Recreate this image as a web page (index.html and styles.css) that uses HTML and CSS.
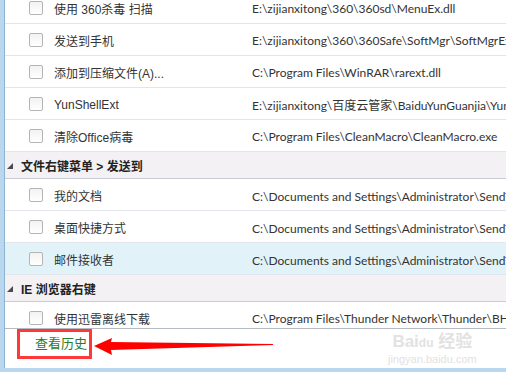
FILE: index.html
```html
<!DOCTYPE html>
<html lang="zh-CN">
<head>
    <meta charset="UTF-8">
    <title>右键菜单管理</title>
    <link rel="stylesheet" href="styles.css">
</head>
<body>
    <div class="panel">
        <div class="list">
            <div class="list-inner">
                <div class="row">
                    <span class="check"></span>
                    <span class="name">使用 360杀毒 扫描</span>
                    <span class="path">E:\zijianxitong\360\360sd\MenuEx.dll</span>
                </div>
                <div class="row">
                    <span class="check"></span>
                    <span class="name">发送到手机</span>
                    <span class="path">E:\zijianxitong\360\360Safe\SoftMgr\SoftMgrExt.dll</span>
                </div>
                <div class="row">
                    <span class="check"></span>
                    <span class="name">添加到压缩文件(A)...</span>
                    <span class="path">C:\Program Files\WinRAR\rarext.dll</span>
                </div>
                <div class="row">
                    <span class="check"></span>
                    <span class="name">YunShellExt</span>
                    <span class="path">E:\zijianxitong\百度云管家\BaiduYunGuanjia\YunShellExt.dll</span>
                </div>
                <div class="row">
                    <span class="check"></span>
                    <span class="name">清除Office病毒</span>
                    <span class="path">C:\Program Files\CleanMacro\CleanMacro.exe</span>
                </div>

                <div class="group">
                    <svg class="arrow" width="6" height="6" viewBox="0 0 6 6"><polygon points="6,0 6,6 0,6"/></svg>
                    <span>文件右键菜单 &gt; 发送到</span>
                </div>
                <div class="row">
                    <span class="check"></span>
                    <span class="name">我的文档</span>
                    <span class="path">C:\Documents and Settings\Administrator\SendTo\我的文档.mydocs</span>
                </div>
                <div class="row">
                    <span class="check"></span>
                    <span class="name">桌面快捷方式</span>
                    <span class="path">C:\Documents and Settings\Administrator\SendTo\桌面快捷方式.DeskLink</span>
                </div>
                <div class="row selected">
                    <span class="check"></span>
                    <span class="name">邮件接收者</span>
                    <span class="path">C:\Documents and Settings\Administrator\SendTo\邮件接收者.MAPIMail</span>
                </div>

                <div class="group">
                    <svg class="arrow" width="6" height="6" viewBox="0 0 6 6"><polygon points="6,0 6,6 0,6"/></svg>
                    <span>IE 浏览器右键</span>
                </div>
                <div class="row">
                    <span class="check"></span>
                    <span class="name">使用迅雷离线下载</span>
                    <span class="path">C:\Program Files\Thunder Network\Thunder\BHO\geturl.htm</span>
                </div>
            </div>
        </div>

        <div class="footer">
            <a class="history" href="#">查看历史</a>
            <span class="mark-box"></span>
            <svg class="mark-arrow" width="280" height="40" viewBox="0 0 280 40">
                <polygon points="89,17 107,9 106,13 268,15 268,16 106,21 107,26"/>
            </svg>
            <div class="watermark">
                <div class="wm-logo">Bai<span class="wm-du">du</span> 经验</div>
                <div class="wm-url">jingyan.baidu.com</div>
            </div>
        </div>
    </div>
</body>
</html>
```

FILE: styles.css
```css
body {
    margin: 0;
    padding: 0 0 4px 0;
    background-color: #b9d7ee;
    font-family: "Liberation Sans", "Noto Sans CJK SC", sans-serif;
    font-size: 12px;
    color: #333;
}
.panel {
    margin-left: 4px;
    height: 368px;
    border-left: 1px solid #8fb2cf;
    background: #fff;
    display: flex;
    flex-direction: column;
}
.list {
    flex: 1;
    overflow: hidden;
}
.list-inner {
    margin-top: -8px;
}
.row {
    display: grid;
    grid-template-columns: 14px 187px 1fr;
    column-gap: 11px;
    align-items: center;
    height: 31px;
    padding-left: 24px;
    border-bottom: 1px solid #e3e5ec;
    white-space: nowrap;
}
.row.selected {
    background-color: #e1f3f9;
}
.check {
    width: 12px;
    height: 12px;
    border: 1px solid #b4b4b4;
    border-radius: 2px;
    background: linear-gradient(#f2f2f2, #fff);
}
.name,
.path {
    overflow: hidden;
    padding-top: 2px;
}
.path {
    font-family: Lato, "Noto Sans CJK SC", sans-serif;
}
.group {
    display: flex;
    align-items: center;
    height: 26px;
    padding-left: 2px;
    background-color: #f3f1f4;
    border-bottom: 1px solid #c8ccd6;
    font-weight: bold;
    color: #222;
}
.group .arrow {
    fill: #4a4a4a;
    margin-right: 8px;
    margin-top: 2px;
}
.footer {
    position: relative;
    border-top: 1px solid #b6bac2;
    padding: 6px 0 0 30px;
    height: 33px;
}
.history {
    font-size: 13px;
    line-height: 18px;
    color: #2a7d2e;
    text-decoration: none;
}
.mark-box {
    position: absolute;
    left: 12px;
    top: 0;
    width: 69px;
    height: 24px;
    border: 3px solid #ff3838;
}
.mark-arrow {
    position: absolute;
    left: 0;
    top: 0;
    fill: #ff0000;
}
.watermark {
    position: absolute;
    left: 383px;
    top: 4px;
    color: #e2e2e2;
    text-align: center;
}
.wm-logo {
    font-size: 17px;
    font-weight: bold;
    line-height: 18px;
}
.wm-du {
    font-size: 12px;
}
.wm-url {
    font-size: 11px;
    line-height: 14px;
}
```
